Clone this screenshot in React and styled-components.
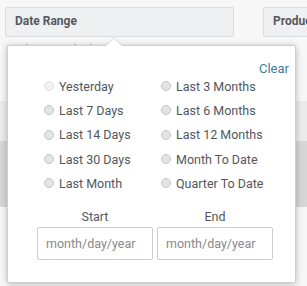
import React from 'react'
import styled, { createGlobalStyle } from 'styled-components'

const Global = createGlobalStyle`
    html, body {
        margin: 0;
        padding: 0;
        background: #f7f7f7;
        font-family: Roboto, "Liberation Sans", Arial, sans-serif;
    }
    * { box-sizing: border-box; }
`;

const Page = styled.div`
    position: relative;
    width: 307px;
    height: 286px;
    overflow: hidden;
    background: #f7f7f7;
`;

const FilterBar = styled.div`
    display: flex;
    gap: 29px;
    padding: 7px 0 0 5px;
`;

const Filter = styled.div`
    flex: ${p => (p.grow ? '0 0 229px' : '1 0 60px')};
    height: 30px;
    background: #eef0f2;
    border: 1px solid #dcdde0;
    border-radius: 2px 0 0 2px;
    display: flex;
    flex-direction: column;
`;

const FilterTitle = styled.div`
    padding: 6px 0 0 9px;
    font-size: 12px;
    font-weight: 700;
    color: #555a60;
    white-space: nowrap;
    overflow: hidden;
`;

const Hint = styled.div`
    padding: 6px 0 0 18px;
    font-size: 12px;
    color: #999;
    white-space: nowrap;
`;

const Band = styled.div`
    margin-top: ${p => p.top}px;
    height: ${p => p.h}px;
    background: ${p => p.bg};
`;

const Popover = styled.div`
    position: absolute;
    top: 45px;
    left: 7px;
    width: 289px;
    height: 238px;
    background: #fff;
    border: 1px solid #cfcfcf;
    border-radius: 2px;
    box-shadow: 0 1px 6px rgba(0, 0, 0, 0.25);
    padding: 15px 0 0 0;

    &::before, &::after {
        content: '';
        position: absolute;
        left: 98px;
        width: 0;
        height: 0;
        border-left: 8px solid transparent;
        border-right: 8px solid transparent;
    }
    &::before {
        top: -9px;
        border-bottom: 8px solid #cfcfcf;
    }
    &::after {
        top: -8px;
        border-bottom: 8px solid #fff;
    }
`;

const ClearRow = styled.div`
    display: flex;
    justify-content: flex-end;
    padding-right: 6px;
`;

const Clear = styled.a`
    font-size: 13px;
    color: #3c7ea0;
    cursor: pointer;
`;

const Options = styled.div`
    display: grid;
    grid-template-columns: 117px 130px;
    grid-auto-flow: column;
    grid-template-rows: repeat(5, 24.3px);
    margin-top: -2px;
    padding-left: 36px;
`;

const Option = styled.label`
    display: flex;
    align-items: center;
    gap: 5px;
    font-size: 12.5px;
    color: #52575d;
    white-space: nowrap;
`;

const Radio = styled.span`
    width: 10px;
    height: 10px;
    border-radius: 50%;
    background: ${p => (p.disabled ? '#f2f2f2' : '#e4e4e4')};
    border: 1px solid ${p => (p.disabled ? '#e0e0e0' : '#c4c4c4')};
    flex: none;
`;

const Range = styled.div`
    display: flex;
    gap: 4px;
    padding: 14px 0 0 29px;
`;

const Field = styled.div`
    display: flex;
    flex-direction: column;
    align-items: center;
    gap: 3px;
    width: 116px;
`;

const FieldLabel = styled.div`
    font-size: 12.5px;
    color: #52575d;
`;

const DateInput = styled.input`
    width: 116px;
    height: 33px;
    border: 1px solid #cccccc;
    border-radius: 2px;
    padding: 0 8px;
    font-family: inherit;
    font-size: 12.5px;
    color: #444;
    outline: none;
    &::placeholder { color: #8a8a8a; }
`;

const left = ['Yesterday', 'Last 7 Days', 'Last 14 Days', 'Last 30 Days', 'Last Month']
const right = ['Last 3 Months', 'Last 6 Months', 'Last 12 Months', 'Month To Date', 'Quarter To Date']

const App = () => {
    return (
        <Page>
            <Global />
            <FilterBar>
                <Filter grow>
                    <FilterTitle>Date Range</FilterTitle>
                </Filter>
                <Filter>
                    <FilterTitle>Product</FilterTitle>
                </Filter>
            </FilterBar>
            <Hint>Show results by Date Range</Hint>
            <Band top={44} h={40} bg="#ebebeb" />
            <Band top={0} h={66} bg="#d6d6d6" />
            <Popover>
                <ClearRow>
                    <Clear>Clear</Clear>
                </ClearRow>
                <Options>
                    {[...left, ...right].map((o, i) => (
                        <Option key={o}>
                            <Radio disabled={i === 0} />
                            {o}
                        </Option>
                    ))}
                </Options>
                <Range>
                    <Field>
                        <FieldLabel>Start</FieldLabel>
                        <DateInput placeholder="month/day/year" />
                    </Field>
                    <Field>
                        <FieldLabel>End</FieldLabel>
                        <DateInput placeholder="month/day/year" />
                    </Field>
                </Range>
            </Popover>
        </Page>
    )
}

export default App
